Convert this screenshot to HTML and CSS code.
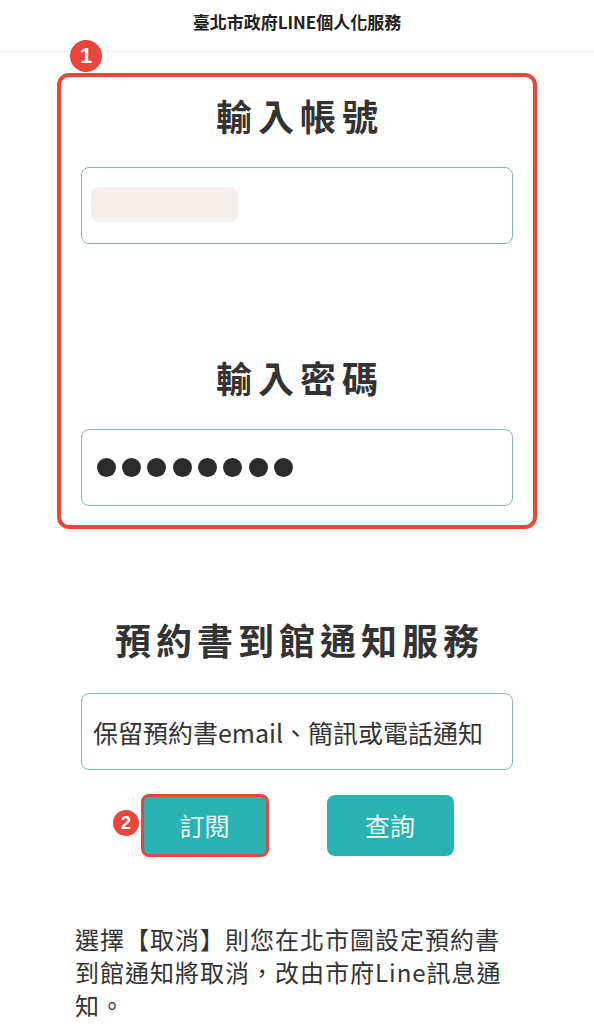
FILE: index.html
```html
<!DOCTYPE html>
<html lang="zh-Hant">
<head>
<meta charset="utf-8">
<title>臺北市政府LINE個人化服務</title>
<link rel="stylesheet" href="styles.css">
</head>
<body>
<header class="topbar">
  <h1 class="topbar-title">臺北市政府LINE個人化服務</h1>
</header>
<main class="page">
  <section class="login-box">
    <span class="badge badge-1">1</span>
    <h2 class="field-title">輸入帳號</h2>
    <div class="field"><span class="placeholder-bar"></span></div>
    <h2 class="field-title field-title-2">輸入密碼</h2>
    <div class="field field-password">
      <span class="dot"></span><span class="dot"></span><span class="dot"></span><span class="dot"></span>
      <span class="dot"></span><span class="dot"></span><span class="dot"></span><span class="dot"></span>
    </div>
  </section>

  <h2 class="section-title">預約書到館通知服務</h2>
  <div class="field field-text">保留預約書email、簡訊或電話通知</div>

  <div class="actions">
    <button class="btn btn-subscribe">訂閱<span class="badge badge-2">2</span></button>
    <button class="btn">查詢</button>
  </div>

  <p class="note">選擇【取消】則您在北市圖設定預約書到館通知將取消，改由市府Line訊息通知。</p>
</main>
</body>
</html>
```
FILE: styles.css
```css
* { box-sizing: border-box; }

html, body {
  margin: 0;
  padding: 0;
  background: #ffffff;
}

body {
  font-family: "Noto Sans CJK TC", "Noto Sans", sans-serif;
  color: #333333;
  width: 594px;
  overflow: hidden;
}

.topbar {
  height: 52px;
  border-bottom: 1px solid #ededed;
  display: flex;
  align-items: center;
  justify-content: center;
  padding-bottom: 8px;
}

.topbar-title {
  margin: 0;
  font-size: 17px;
  font-weight: 700;
  color: #222222;
  line-height: 20px;
}

.login-box {
  position: relative;
  margin: 21px 0 0 57px;
  width: 480px;
  height: 456px;
  border: 4px solid #e8453c;
  border-radius: 12px;
  padding: 18px 20px;
}

.field-title {
  margin: 0;
  font-size: 36px;
  line-height: 40px;
  font-weight: 700;
  text-align: center;
  letter-spacing: 6px;
  padding-left: 6px;
  color: #333333;
}

.field-title-2 {
  margin-top: 113px;
}

.field {
  width: 432px;
  height: 77px;
  margin-top: 32px;
  border: 1.5px solid #82b7b4;
  border-radius: 8px;
  background: #ffffff;
}

.placeholder-bar {
  display: block;
  margin: 19px 0 0 9px;
  width: 147px;
  height: 35px;
  border-radius: 8px;
  background: #f4efea;
}

.field-password {
  display: flex;
  align-items: center;
  gap: 6.4px;
  padding-left: 14.5px;
}

.dot {
  width: 19px;
  height: 19px;
  border-radius: 50%;
  background: #2b2b2b;
}

.badge {
  position: absolute;
  display: flex;
  align-items: center;
  justify-content: center;
  border-radius: 50%;
  background: #e8453c;
  color: #ffffff;
  font-family: "Liberation Sans", "Noto Sans", sans-serif;
  font-weight: 700;
}

.badge-1 {
  left: 9px;
  top: -37px;
  width: 32px;
  height: 32px;
  font-size: 22px;
}

.section-title {
  margin: 90px 0 0;
  font-size: 36px;
  line-height: 40px;
  font-weight: 700;
  text-align: center;
  letter-spacing: 5px;
  padding-left: 5px;
  color: #333333;
}

.field-text {
  margin: 34px 0 0 81px;
  display: flex;
  align-items: center;
  padding-left: 11px;
  font-size: 25px;
  color: #333333;
  white-space: nowrap;
}

.actions {
  display: flex;
  justify-content: center;
  align-items: center;
  gap: 58px;
  margin-top: 24px;
}

.btn {
  width: 127px;
  height: 61px;
  border: 0;
  border-radius: 8px;
  background: #2ab2b3;
  color: #effafa;
  font-family: "Noto Sans CJK TC", "Noto Sans", sans-serif;
  font-size: 25px;
  line-height: 1;
  padding: 0;
  display: flex;
  align-items: center;
  justify-content: center;
}

.btn-subscribe {
  position: relative;
  width: 128px;
  height: 63px;
  border: 3px solid #e5473d;
}

.badge-2 {
  left: -30.5px;
  top: 13px;
  width: 26px;
  height: 26px;
  font-size: 18px;
}

.note {
  margin: 65px 0 0 75px;
  width: 432px;
  font-size: 24px;
  line-height: 33px;
  letter-spacing: 1px;
  color: #333333;
}
```
